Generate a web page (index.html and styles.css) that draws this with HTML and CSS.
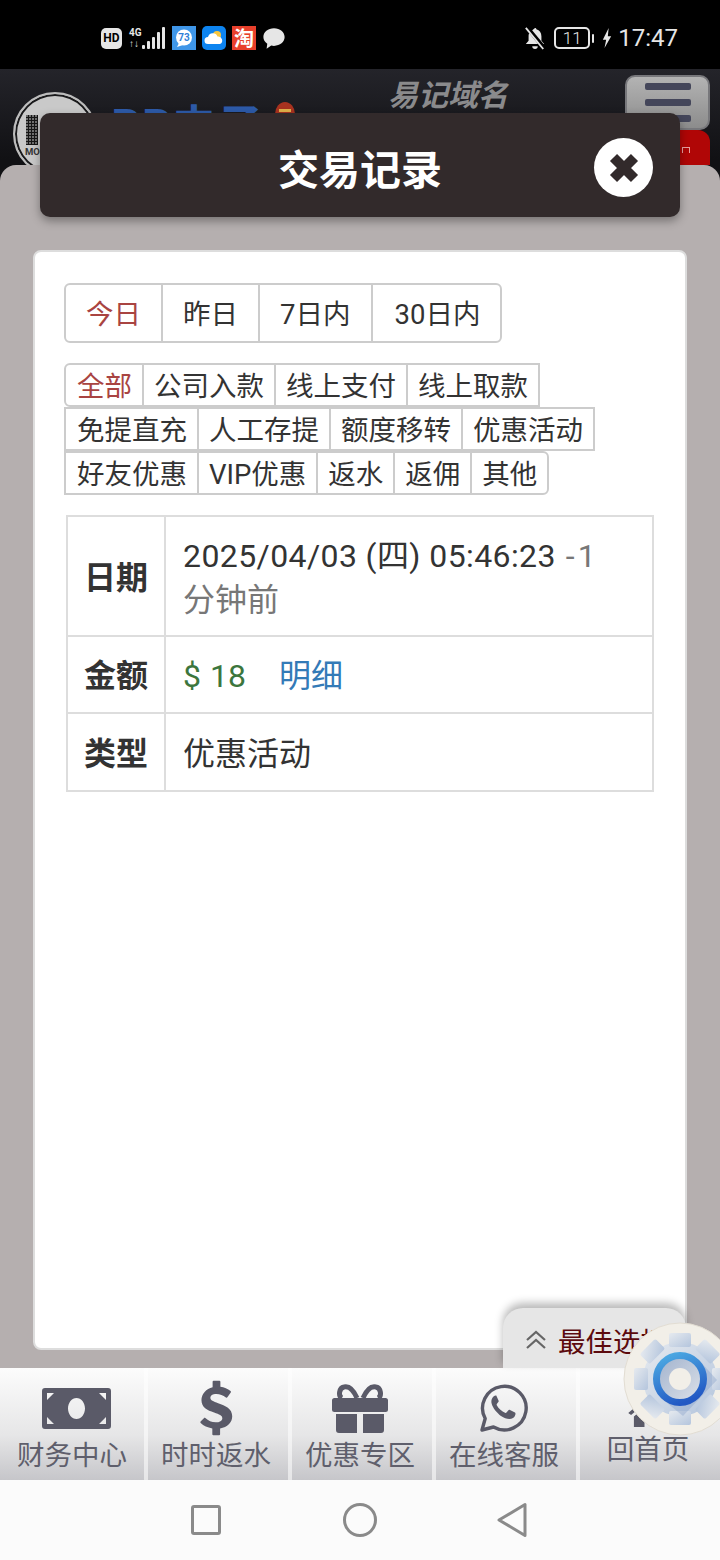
FILE: index.html
```html
<!DOCTYPE html>
<html lang="zh">
<head>
<meta charset="utf-8">
<title>交易记录</title>
<link rel="stylesheet" href="styles.css">
</head>
<body>
<div class="status">
  <div class="status-left">
    <span class="hd">HD</span>
    <span class="net"><span class="net-label"><b>4G</b><b>↑↓</b></span>
      <svg width="23" height="22" viewBox="0 0 23 22"><g fill="#e6e6e6"><rect x="0" y="18" width="3" height="4" rx="1"/><rect x="5" y="14" width="3" height="8" rx="1"/><rect x="10" y="10" width="3" height="12" rx="1"/><rect x="15" y="5" width="3" height="17" rx="1"/><rect x="20" y="0" width="3" height="22" rx="1"/></g></svg></span>
    <svg class="app" width="24" height="24" viewBox="0 0 24 24"><rect width="24" height="24" fill="#3f96e8"/><circle cx="12" cy="11.500" r="8" fill="#fff"/><path d="M7 17l-2 4 6-2z" fill="#fff"/><text x="12" y="15" class="app-num">73</text></svg>
    <svg class="app" width="24" height="24" viewBox="0 0 24 24"><rect width="24" height="24" rx="5" fill="#0d84f0"/><circle cx="15" cy="9" r="4" fill="#f7c640"/><path d="M6 18a3.500 3.500 0 0 1 0-7 5 5 0 0 1 9.500-.5A4 4 0 0 1 18 18z" fill="#fff"/></svg>
    <span class="tao">淘</span>
    <svg class="app" width="24" height="23" viewBox="0 0 26 24"><path d="M13 1c6.500 0 11.500 4 11.500 9.500S19.500 20 13 20c-1 0-2-.1-3-.3L5 23l.7-5.200C3 16 1.500 13.500 1.500 10.500 1.500 5 6.500 1 13 1z" fill="#e6e6e6"/></svg>
  </div>
  <div class="status-right">
    <svg width="22" height="24" viewBox="0 0 24 26"><path d="M12 2c1 0 1.500.7 1.500 1.500C17 4.500 19 7 19 11v5l3 3.500H2L5 16v-5c0-1.500.3-3 1-4z" fill="#e6e6e6"/><path d="M9 22h6a3 3 0 0 1-6 0z" fill="#e6e6e6"/><path d="M3 1l19 23" stroke="#000" stroke-width="4.500"/><path d="M2 2l19 23" stroke="#e6e6e6" stroke-width="2"/></svg>
    <span class="batt"><span class="batt-box">11</span><span class="batt-tip"></span></span>
    <svg width="10" height="24" viewBox="0 0 12 24"><path d="M8 0L1 14h4l-2 10 8-14H7z" fill="#e6e6e6"/></svg>
    <span class="clock">17:47</span>
  </div>
</div>

<div class="app-area">
  <header class="topbar">
    <div class="logo"><span class="logo-mark"></span><span class="logo-sub">MOB</span></div>
    <div class="brand">PP电子<span class="brand-badge"><span></span></span></div>
    <div class="domain">易记域名</div>
    <div class="menu-col">
      <div class="menu-btn"><span></span><span></span><span></span></div>
      <div class="red-btn"><span></span></div>
    </div>
  </header>

  <main class="sheet">
    <section class="card">
      <div class="tabs">
        <a class="tab on">今日</a><a class="tab">昨日</a><a class="tab">7日内</a><a class="tab">30日内</a>
      </div>
      <div class="filters">
        <a class="chip on first">全部</a><a class="chip">公司入款</a><a class="chip">线上支付</a><a class="chip">线上取款</a>
        <a class="chip">免提直充</a><a class="chip">人工存提</a><a class="chip">额度移转</a><a class="chip">优惠活动</a>
        <a class="chip">好友优惠</a><a class="chip">VIP优惠</a><a class="chip">返水</a><a class="chip">返佣</a><a class="chip last">其他</a>
      </div>
      <table class="record">
        <tr class="r-date"><th>日期</th><td><span class="stamp">2025/04/03 (四) 05:46:23</span> <span class="ago">-1 <span class="nowrap">分钟前</span></span></td></tr>
        <tr class="r-row"><th>金额</th><td><span class="money">$ 18</span><a class="detail">明细</a></td></tr>
        <tr class="r-last"><th>类型</th><td>优惠活动</td></tr>
      </table>
    </section>
  </main>

  <nav class="tabbar">
    <a class="nav-item">
      <svg class="nav-icon i-money" width="69" height="41" viewBox="0 0 69 41"><path fill-rule="evenodd" d="M3 0h63a3 3 0 0 1 3 3v35a3 3 0 0 1-3 3H3a3 3 0 0 1-3-3V3a3 3 0 0 1 3-3zM34.500 10c-4.700 0-8.500 4.700-8.500 10.500S29.800 31 34.500 31 43 26.300 43 20.500 39.200 10 34.500 10zM5 5v7l7-7zM64 5h-7l7 7zM5 36h7l-7-7zM64 36v-7l-7 7z" fill="#5a5a68"/></svg>
      <span>财务中心</span>
    </a>
    <a class="nav-item">
      <svg class="nav-icon i-dollar" width="33" height="56" viewBox="0 0 34 56"><path d="M14 0h6a1 1 0 0 1 1 1v5c4 .5 7.500 2 10.500 4.500.5.500.5 1 .2 1.500l-3.500 5c-.4.500-1 .5-1.500.2-3-2.300-6-3.700-10-3.700-3.500 0-6 1.500-6 4 0 2.700 3 3.800 8 5.500 7.500 2.500 14.500 5.500 14.500 13.500 0 6.500-5 11.500-12.500 12.500V55a1 1 0 0 1-1 1h-6a1 1 0 0 1-1-1v-6c-5-.7-9-2.500-12-5.500-.5-.5-.5-1-.1-1.500L4 38.500c.4-.5 1-.5 1.500-.1 3 2.800 6.500 4.400 10.800 4.400 3.700 0 6.700-1.500 6.700-4.300 0-2.800-3-3.900-8.500-5.800C7.500 30.300 1.500 27.500 1.500 19.800 1.500 13.500 6.500 8 13 6.500V1a1 1 0 0 1 1-1z" fill="#5a5a68"/></svg>
      <span>时时返水</span>
    </a>
    <a class="nav-item">
      <svg class="nav-icon i-gift" width="56" height="49" viewBox="0 0 56 49"><path d="M2.500 14h51a2.500 2.500 0 0 1 2.500 2.500v9a2.500 2.500 0 0 1-2.500 2.500h-51A2.500 2.500 0 0 1 0 25.500v-9A2.500 2.500 0 0 1 2.500 14zM4 30h21v19H7a3 3 0 0 1-3-3zM31 30h21v16a3 3 0 0 1-3 3H31z" fill="#5a5a68"/><path d="M25 14C21 5 16 2 12 3 7 4 6 12 10 14M31 14C35 5 40 2 44 3c5 1 6 9 2 11" fill="none" stroke="#5a5a68" stroke-width="5"/></svg>
      <span>优惠专区</span>
    </a>
    <a class="nav-item">
      <svg class="nav-icon i-chat" width="48" height="48" viewBox="0 0 48 48"><path d="M2 46l3.200-11.500A21.800 21.800 0 1 1 13.500 43z" fill="none" stroke="#5a5a68" stroke-width="3.400" stroke-linejoin="round"/><path d="M16.500 11.500c-1-.2-2 0-3 1-1.500 1.500-2.500 3.500-2 6.500 1 5 6 10.500 9.500 13 4.500 3 9 4 12 2 1.500-1 2.300-2.500 2.500-4 .1-1-.3-1.400-1-1.800l-4.500-2.200c-.7-.3-1.300-.2-1.800.5l-1.700 2c-.4.500-.9.500-1.500.2-3-1.200-6.500-4-8.200-7.500-.3-.6-.2-1 .2-1.500l1.300-1.600c.4-.5.500-1 .2-1.600l-2-4.600c-.2-.4-.4-.5-.7-.4z" fill="#5a5a68"/></svg>
      <span>在线客服</span>
    </a>
    <a class="nav-item nav-home">
      <svg class="nav-icon i-home" width="40" height="31" viewBox="0 0 56 44"><path d="M28 0L0 24l4 3 24-20 24 20 4-3zM8 29l20-17 20 17v15H33V31H23v13H8z" fill="#5a5a68"/></svg>
      <span>回首页</span>
    </a>
  </nav>

  <div class="modal-head">
    <h1>交易记录</h1>
    <span class="close"><svg width="32" height="32" viewBox="0 0 32 32"><path d="M5.500 5.500l21 21M26.500 5.500l-21 21" fill="none" stroke="#322a2b" stroke-width="10"/></svg></span>
  </div>

  <div class="best">
    <svg width="22" height="20" viewBox="0 0 22 20"><path d="M2 10l9-8 9 8M2 18l9-8 9 8" fill="none" stroke="#666" stroke-width="2.200"/></svg>
    <span>最佳选择</span>
  </div>

  <div class="gear">
    <svg width="114" height="114" viewBox="0 0 114 114">
      <defs>
        <linearGradient id="gearFill" x1="0" y1="0" x2="1" y2="1"><stop offset="0" stop-color="#e6eaef"/><stop offset="1" stop-color="#b4c5dd"/></linearGradient>
        <linearGradient id="ringFill" x1="0.2" y1="0" x2="0.6" y2="1"><stop offset="0" stop-color="#4ba8e2"/><stop offset="1" stop-color="#2258c4"/></linearGradient>
        <linearGradient id="holeFill" x1="0" y1="0" x2="1" y2="1"><stop offset="0" stop-color="#9fb1cc"/><stop offset="1" stop-color="#dfe3ea"/></linearGradient>
      </defs>
      <circle cx="57" cy="57" r="56" fill="#f2efe8" stroke="#e2ddd3"/>
      <g fill="url(#gearFill)">
        <circle cx="57" cy="57" r="37"/>
        <rect x="46" y="11" width="22" height="14" rx="2"/><rect x="46" y="89" width="22" height="14" rx="2"/><rect x="11" y="46" width="14" height="22" rx="2"/><rect x="89" y="46" width="14" height="22" rx="2"/>
        <rect x="46" y="11" width="22" height="14" rx="2" transform="rotate(45 57 57)"/><rect x="46" y="11" width="22" height="14" rx="2" transform="rotate(135 57 57)"/><rect x="46" y="11" width="22" height="14" rx="2" transform="rotate(225 57 57)"/><rect x="46" y="11" width="22" height="14" rx="2" transform="rotate(315 57 57)"/>
      </g>
      <path d="M76 38L94 58 60 94 38 76z" fill="#6f8fbf" opacity=".3"/>
      <circle cx="57" cy="57" r="23.500" fill="url(#holeFill)" stroke="url(#ringFill)" stroke-width="7"/>
      <circle cx="57" cy="57" r="11" fill="#f2efe8"/>
    </svg>
  </div>
</div>

<div class="sysnav">
  <span class="sys-square"></span>
  <span class="sys-circle"></span>
  <svg width="32" height="36" viewBox="0 0 32 36"><path d="M29 2.500v31L3 18z" fill="none" stroke="#8a8a8a" stroke-width="3" stroke-linejoin="round"/></svg>
</div>
</body>
</html>
```

FILE: styles.css
```css
* { box-sizing: border-box; }
html, body { margin: 0; padding: 0; }
body {
  width: 720px;
  height: 1560px;
  display: flex;
  flex-direction: column;
  overflow: hidden;
  font-family: "Roboto", "Noto Sans CJK SC", sans-serif;
  color: #333;
  background: #000;
}

/* status bar */
.status {
  height: 69px;
  background: #000;
  color: #e6e6e6;
  display: flex;
  justify-content: space-between;
  align-items: center;
  padding: 7px 42px 0 101px;
}
.status-left, .status-right { display: flex; align-items: center; }
.status-left { gap: 6px; }
.status-right { gap: 6px; }
.hd {
  width: 21px; height: 21px; border-radius: 5px;
  background: #e6e6e6; color: #000;
  font: 700 12px/21px "Roboto", sans-serif;
  text-align: center;
}
.net { display: flex; align-items: flex-end; margin: 0 1px; }
.net-label { display: flex; flex-direction: column; width: 13px; }
.net-label b { font: 700 10px/11px "Roboto", sans-serif; }
.app-num { font: 700 10px "Roboto", sans-serif; fill: #2f80d8; text-anchor: middle; }
.tao {
  width: 24px; height: 24px;
  background: #e8402c; color: #fff;
  font: 700 20px/24px "Noto Sans CJK SC", sans-serif;
  text-align: center;
}
.batt { display: flex; align-items: center; gap: 2px; margin: 0 2px; }
.batt-box {
  width: 36px; height: 22px;
  border: 2px solid #e6e6e6; border-radius: 5px;
  font: 300 17px/18px "Roboto", sans-serif;
  text-align: center;
}
.batt-tip { width: 2px; height: 9px; background: #e6e6e6; border-radius: 1px; }
.clock { font: 400 24px/30px "Roboto", sans-serif; }

/* app area */
.app-area {
  position: relative;
  height: 1411px;
  display: flex;
  flex-direction: column;
  overflow: hidden;
  background: linear-gradient(#24242a, #111114 90px);
}
.topbar {
  height: 96px;
  flex: none;
  display: flex;
  padding: 6px 10px 0 13px;
}
.logo {
  width: 84px; height: 84px;
  margin-top: 17px;
  flex: none;
  border-radius: 50%;
  background: #c9c9c9;
  border: 2px solid #bdbdbd;
  box-shadow: inset 0 0 0 2px #1a1a1c;
  color: #333;
  padding: 21px 0 0 10px;
}
.logo-mark {
  display: block;
  width: 12px; height: 30px;
  margin-left: 1px;
  background-color: #151515;
  background-image: radial-gradient(circle at 1px 1px, #777 .7px, transparent .8px);
  background-size: 3px 3px;
}
.logo-sub { display: block; font: 700 9.500px/12px "Roboto", sans-serif; margin-top: 1px; }
.brand {
  margin: 23px 0 0 13px;
  width: 278px;
  flex: none;
  font: 700 46px/50px "Noto Sans CJK SC", sans-serif;
  color: #2d5aa8;
  display: flex;
  align-items: flex-start;
}
.brand-badge { width: 20px; height: 24px; margin: 4px 0 0 12px; border-radius: 50%; background: #a8321f; padding: 7px 4px 0; }
.brand-badge span { display: block; height: 3px; background: #e0b04a; }
.domain {
  flex: none;
  margin-top: -4px;
  font: italic 700 30px/44px "Noto Sans CJK SC", sans-serif;
  color: #8a8a8c;
}
.menu-col { margin-left: auto; width: 85px; display: flex; flex-direction: column; flex: none; }
.menu-btn {
  height: 68px;
  border: 2px solid #77777b;
  border-radius: 10px;
  background: linear-gradient(#b3b3b3, #8c8c8c);
  display: flex; flex-direction: column; align-items: center; justify-content: center; gap: 9px;
}
.menu-btn span { width: 46px; height: 7px; border-radius: 2px; background: #44465a; }
.red-btn { height: 40px; width: 50px; margin-left: 35px; border-radius: 12px 12px 0 0; background: #b00606; padding: 17px 0 0 22px; }
.red-btn span { display: block; width: 8px; height: 6px; border: 1px solid #e8a0a0; border-bottom: 0; }

/* sheet */
.sheet {
  height: 1203px;
  flex: none;
  background: #b5afaf;
  border-radius: 16px 16px 0 0;
  padding: 85px 33px 18px;
}
.card {
  height: 100%;
  background: #fff;
  border: 2px solid #ddd;
  border-radius: 8px;
  padding: 31px 30px 0 29px;
}
.tabs { display: inline-flex; border: 2px solid #ccc; border-radius: 6px; height: 60px; vertical-align: top; }
.tab { font-size: 27.500px; line-height: 59px; padding: 0 20px; border-left: 2px solid #ccc; color: #333; }
.tab:first-child { border-left: 0; }
.tab:nth-child(3) { padding-right: 21px; }
.tab:nth-child(4) { padding-left: 21px; }
.tab.on { color: #a94442; }
.filters { display: flex; flex-wrap: wrap; width: 600px; margin-top: 20px; }
.chip {
  height: 44px;
  font-size: 27.500px;
  line-height: 43px;
  padding: 0 10px;
  border: 2px solid #ccc;
  margin-left: -2px;
  color: #333;
}
.chip:nth-child(1), .chip:nth-child(5), .chip:nth-child(9) { margin-left: 0; padding-left: 11px; }
.chip.on { color: #a94442; }
.chip.first { border-radius: 6px 0 0 6px; }
.chip.last { border-radius: 0 6px 6px 0; }
.record {
  width: 588px;
  margin: 20px 0 0 2px;
  border-collapse: collapse;
  font-size: 32px;
}
.record th, .record td { border: 2px solid #ddd; line-height: 44px; padding-top: 4px; }
.record th { width: 98px; padding-left: 0; padding-right: 0; font-size: 32px; font-weight: 700; text-align: center; color: #333; }
.record td { padding-left: 17px; padding-right: 17px; color: #333; }
.r-date { height: 120px; }
.r-row { height: 77px; }
.r-last { height: 78px; }
.stamp { letter-spacing: .4px; }
.ago { color: #777; letter-spacing: 3px; margin-left: 2px; }
.nowrap { white-space: nowrap; letter-spacing: 0; }
.money { color: #3c763d; word-spacing: 1px; }
.detail { color: #337ab7; margin-left: 33px; }

/* nav */
.tabbar {
  height: 112px;
  flex: none;
  display: flex;
}
.nav-item {
  width: 144px;
  flex: none;
  display: flex;
  flex-direction: column;
  align-items: center;
  justify-content: flex-end;
  padding: 0 4px 6px 0;
  border-left: 4px solid rgba(255,255,255,.55);
  background: linear-gradient(#fcfcfc, #e6e6e7 60%, #c6c6ca) border-box;
  color: #5f5f6c;
  font-size: 27.500px;
  line-height: 36px;
}
.nav-item:first-child { border-left: 0; padding-right: 0; }
.nav-item span { display: block; }
.nav-icon { display: block; }
.i-money { margin: 0 0 9px 9px; }
.i-dollar { margin-bottom: 2px; }
.i-gift { margin-bottom: 5px; }
.i-chat { margin-bottom: 6px; }
.i-home { margin-bottom: 5px; }
.nav-home { padding-bottom: 12px; }

/* overlays */
.modal-head {
  position: absolute;
  left: 40px; top: 44px;
  width: 640px; height: 104px;
  background: #322a2b;
  border-radius: 10px;
  box-shadow: 0 4px 10px rgba(0,0,0,.35);
  display: flex;
  align-items: center;
  justify-content: center;
  padding-top: 4px;
}
.modal-head h1 { margin: 0; font-size: 41px; line-height: 60px; font-weight: 700; color: #fff; font-family: "Noto Sans CJK SC", sans-serif; }
.close {
  position: absolute;
  right: 27px; top: 25px;
  width: 59px; height: 59px;
  border-radius: 50%;
  background: #fff;
  display: flex; align-items: center; justify-content: center;
}
.best {
  position: absolute;
  left: 503px; top: 1239px;
  width: 183px; height: 60px;
  background: #e6e6e6;
  border-radius: 20px 20px 0 0;
  box-shadow: 0 -5px 8px rgba(0,0,0,.28);
  display: flex;
  align-items: center;
  gap: 11px;
  padding: 4px 0 0 22px;
  color: #5c0a0e;
  font-size: 27.500px;
  white-space: nowrap;
  overflow: hidden;
}
.best svg { flex: none; }
.gear {
  position: absolute;
  left: 623px; top: 1253px;
  width: 114px; height: 114px;
}
.gear svg { display: block; }

/* system nav */
.sysnav {
  height: 80px;
  flex: none;
  background: #fbfbfb;
  display: flex;
  align-items: center;
  padding-left: 191px;
}
.sys-square { width: 30px; height: 30px; border: 3px solid #8a8a8a; border-radius: 3px; }
.sys-circle { width: 34px; height: 34px; border: 3px solid #8a8a8a; border-radius: 50%; margin-left: 122px; }
.sysnav svg { margin-left: 119px; }
```
